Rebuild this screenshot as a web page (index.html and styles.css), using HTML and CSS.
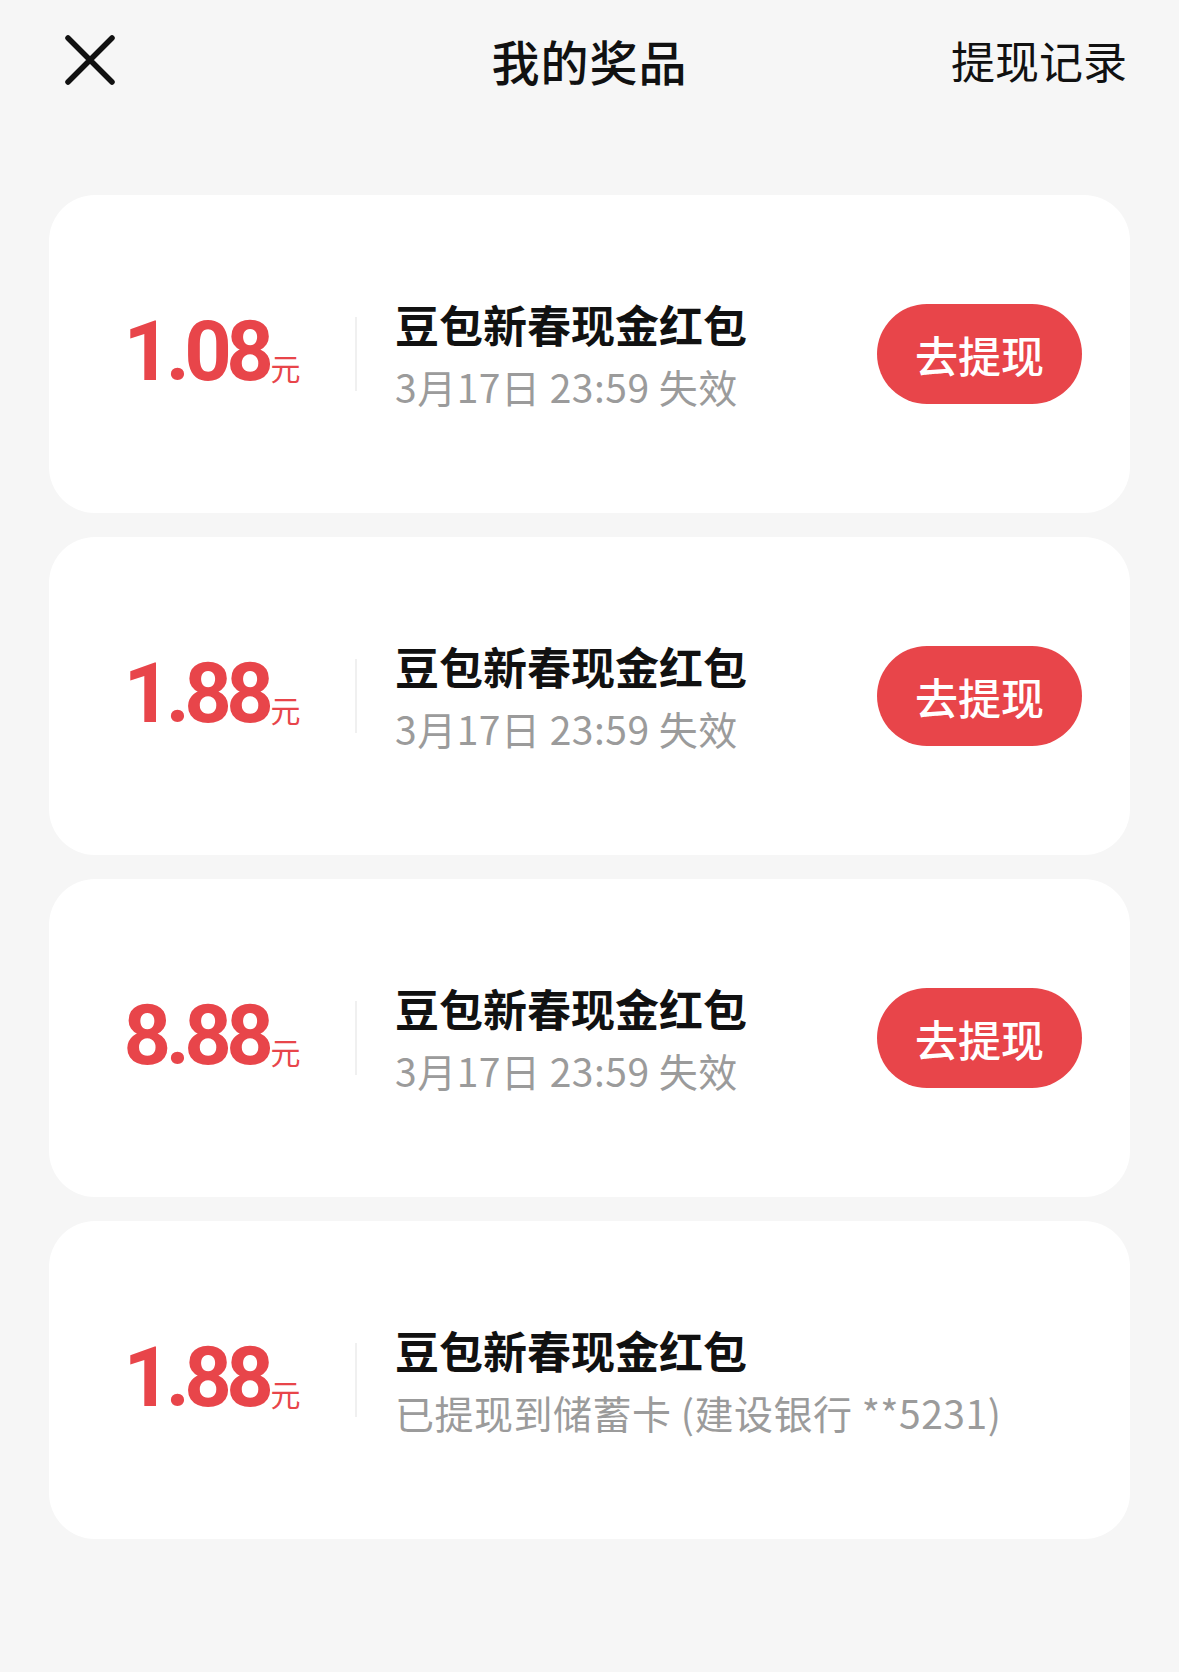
FILE: index.html
```html
<!DOCTYPE html>
<html lang="zh-CN">
<head>
<meta charset="utf-8">
<title>我的奖品</title>
<link rel="stylesheet" href="styles.css">
</head>
<body>
<div class="page">
  <header class="topbar">
    <div class="close">
      <svg width="52" height="52" viewBox="0 0 52 52"><path d="M4 4 L48 48 M48 4 L4 48" stroke="#111" stroke-width="5.5" stroke-linecap="round" fill="none"/></svg>
    </div>
    <div class="title">我的奖品</div>
    <div class="record">提现记录</div>
  </header>
  <main class="list">
    <div class="card">
      <div class="amount"><span class="num">1.08</span><span class="unit">元</span></div>
      <div class="divider"></div>
      <div class="info">
        <div class="name">豆包新春现金红包</div>
        <div class="sub">3月17日 23:59 失效</div>
      </div>
      <div class="btn">去提现</div>
    </div>
    <div class="card">
      <div class="amount"><span class="num">1.88</span><span class="unit">元</span></div>
      <div class="divider"></div>
      <div class="info">
        <div class="name">豆包新春现金红包</div>
        <div class="sub">3月17日 23:59 失效</div>
      </div>
      <div class="btn">去提现</div>
    </div>
    <div class="card">
      <div class="amount"><span class="num">8.88</span><span class="unit">元</span></div>
      <div class="divider"></div>
      <div class="info">
        <div class="name">豆包新春现金红包</div>
        <div class="sub">3月17日 23:59 失效</div>
      </div>
      <div class="btn">去提现</div>
    </div>
    <div class="card">
      <div class="amount"><span class="num">1.88</span><span class="unit">元</span></div>
      <div class="divider"></div>
      <div class="info">
        <div class="name">豆包新春现金红包</div>
        <div class="sub">已提现到储蓄卡 (建设银行 **5231)</div>
      </div>
    </div>
  </main>
</div>
</body>
</html>
```
FILE: styles.css
```css
html, body {
  margin: 0;
  padding: 0;
  background: #f6f6f6;
}
body {
  width: 1179px;
  height: 1672px;
  font-family: "Noto Sans CJK SC", "Noto Sans", sans-serif;
  color: #111;
}
.page {
  display: flex;
  flex-direction: column;
}
.topbar {
  height: 120px;
  display: grid;
  grid-template-columns: 1fr auto 1fr;
  align-items: center;
  padding: 0 52px;
}
.close {
  display: flex;
  align-items: center;
  justify-self: start;
  margin-left: 12px;
}
.close svg { display: block; }
.title {
  font-size: 48px;
  font-weight: 500;
  letter-spacing: 1px;
  line-height: 1;
}
.record {
  justify-self: end;
  font-size: 44px;
  font-weight: 400;
  line-height: 1;
}
.list {
  margin-top: 75px;
  padding: 0 49px;
  display: flex;
  flex-direction: column;
  gap: 24px;
}
.card {
  height: 318px;
  background: #fff;
  border-radius: 46px;
  display: flex;
  align-items: center;
  padding: 0 48px 0 20px;
}
.amount {
  width: 286px;
  display: flex;
  justify-content: center;
  align-items: baseline;
  color: #e8454a;
  margin-top: -6px;
}
.num {
  font-family: Roboto, "Liberation Sans", sans-serif;
  font-weight: 700;
  font-size: 83px;
  letter-spacing: -5.5px;
  line-height: 1;
}
.unit {
  font-size: 30px;
  margin-left: 2px;
  line-height: 1;
}
.divider {
  width: 2px;
  height: 74px;
  background: #f0f0f0;
}
.info {
  flex: 1;
  margin-left: 38px;
  display: flex;
  flex-direction: column;
}
.name {
  font-size: 44px;
  font-weight: 700;
  line-height: 60px;
}
.sub {
  font-size: 39px;
  color: #9b9b9b;
  line-height: 56px;
  margin-top: 4px;
  letter-spacing: 0.5px;
}
.btn {
  width: 205px;
  height: 100px;
  border-radius: 50px;
  background: #e8454a;
  color: #fff;
  font-size: 43px;
  font-weight: 500;
  display: flex;
  align-items: center;
  justify-content: center;
}
```
